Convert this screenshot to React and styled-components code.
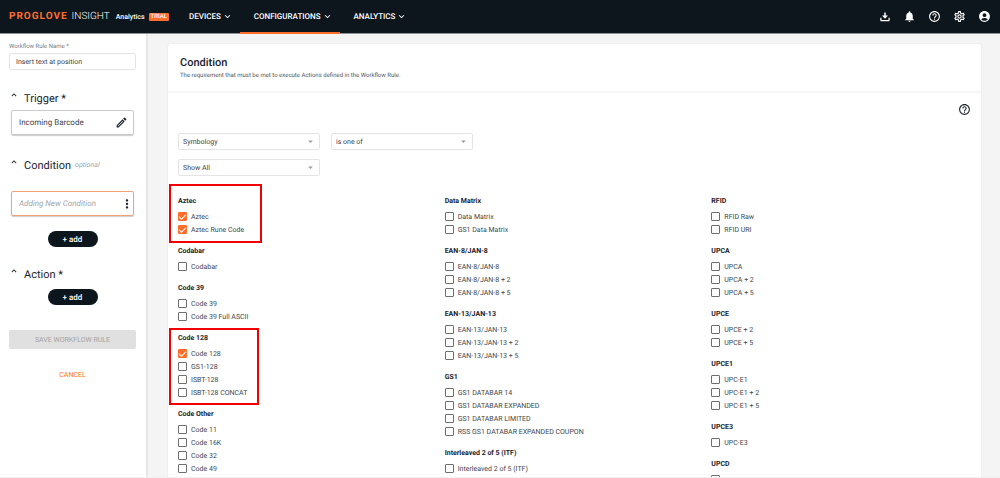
import React, { useState } from "react";
import styled, { createGlobalStyle } from "styled-components";
import {
  MdAccountCircle,
  MdArrowDropDown,
  MdHelpOutline,
  MdKeyboardArrowDown,
  MdKeyboardArrowUp,
  MdMoreVert,
  MdNotifications,
  MdOutlineModeEdit,
  MdOutlineSettings,
} from "react-icons/md";

const navItems = [
  { name: "DEVICES" },
  { name: "CONFIGURATIONS", active: true },
  { name: "ANALYTICS" },
];

const columns = [
  [
    {
      title: "Aztec",
      items: ["Aztec", "Aztec Rune Code"],
      mark: { top: 11, bottom: 7, width: 93 },
    },
    { title: "Codabar", items: ["Codabar"] },
    { title: "Code 39", items: ["Code 39", "Code 39 Full ASCII"] },
    {
      title: "Code 128",
      items: ["Code 128", "GS1-128", "ISBT-128", "ISBT-128 CONCAT"],
      mark: { top: 4, bottom: 6, width: 90 },
    },
    {
      title: "Code Other",
      items: ["Code 11", "Code 16K", "Code 32", "Code 49", "Code 93"],
    },
  ],
  [
    { title: "Data Matrix", items: ["Data Matrix", "GS1 Data Matrix"] },
    {
      title: "EAN-8/JAN-8",
      items: ["EAN-8/JAN-8", "EAN-8/JAN-8 + 2", "EAN-8/JAN-8 + 5"],
    },
    {
      title: "EAN-13/JAN-13",
      items: ["EAN-13/JAN-13", "EAN-13/JAN-13 + 2", "EAN-13/JAN-13 + 5"],
    },
    {
      title: "GS1",
      items: [
        "GS1 DATABAR 14",
        "GS1 DATABAR EXPANDED",
        "GS1 DATABAR LIMITED",
        "RSS GS1 DATABAR EXPANDED COUPON",
      ],
    },
    { title: "Interleaved 2 of 5 (ITF)", items: ["Interleaved 2 of 5 (ITF)"] },
  ],
  [
    { title: "RFID", items: ["RFID Raw", "RFID URI"] },
    { title: "UPCA", items: ["UPCA", "UPCA + 2", "UPCA + 5"] },
    { title: "UPCE", items: ["UPCE + 2", "UPCE + 5"] },
    { title: "UPCE1", items: ["UPC-E1", "UPC-E1 + 2", "UPC-E1 + 5"] },
    { title: "UPCE3", items: ["UPC-E3"] },
    { title: "UPCD", items: ["UPC-D"] },
  ],
];

const DownloadIcon = () => (
  <svg width="12" height="12" viewBox="0 0 24 24" fill="currentColor">
    <path d="M2.500 13.500h2.500v4.500h14v-4.500h2.500V18c0 1.400-1.100 2.500-2.500 2.500H5c-1.400 0-2.500-1.100-2.500-2.500z" />
    <path d="M10.500 3h3v6h4.500l-6 6.500-6-6.500h4.500z" />
  </svg>
);

const Dropdown = ({ label, value }) => (
  <SelectBox>
    <StSelect aria-label={label} defaultValue={value}>
      <option>{value}</option>
    </StSelect>
    <MdArrowDropDown size={11} />
  </SelectBox>
);

const Section = ({ title, hint, gap }) => (
  <SectionHead $gap={gap}>
    <ToggleBtn aria-label={`Collapse ${title}`}>
      <MdKeyboardArrowUp size={10} />
    </ToggleBtn>
    <SectionTitle>{title}</SectionTitle>
    {hint && <Hint>{hint}</Hint>}
  </SectionHead>
);

const App = () => {
  const [ruleName, setRuleName] = useState("Insert text at position");
  const [checked, setChecked] = useState(["Aztec", "Aztec Rune Code", "Code 128"]);

  const toggleHandler = (item) => {
    setChecked(
      checked.includes(item)
        ? checked.filter((name) => name !== item)
        : [...checked, item]
    );
  };

  return (
    <Page>
      <GlobalStyle />
      <Header>
        <Logo href="#">
          <Brand>PROGLOVE</Brand>
          <Product>INSIGHT</Product>
          <Plan>Analytics</Plan>
          <Badge>TRIAL</Badge>
        </Logo>
        <Nav>
          {navItems.map((item) => (
            <NavBtn key={item.name} $active={item.active}>
              {item.name}
              <MdKeyboardArrowDown size={11} />
            </NavBtn>
          ))}
        </Nav>
        <IconSet>
          <IconBtn aria-label="Downloads"><DownloadIcon /></IconBtn>
          <IconBtn aria-label="Notifications"><MdNotifications size={13} /></IconBtn>
          <IconBtn aria-label="Help"><MdHelpOutline size={13} /></IconBtn>
          <IconBtn aria-label="Settings"><MdOutlineSettings size={13} /></IconBtn>
          <IconBtn aria-label="Account"><MdAccountCircle size={13} /></IconBtn>
        </IconSet>
      </Header>

      <Body>
        <Sidebar>
          <FieldLabel htmlFor="rule-name">Workflow Rule Name *</FieldLabel>
          <NameInput
            id="rule-name"
            value={ruleName}
            onChange={(e) => setRuleName(e.target.value)}
          />

          <Section title="Trigger *" gap={20} />
          <StepCard $gap={4}>
            <span>Incoming Barcode</span>
            <IconBtn aria-label="Edit trigger"><MdOutlineModeEdit size={13} /></IconBtn>
          </StepCard>

          <Section title="Condition" hint="optional" gap={22} />
          <StepCard $gap={18} $pending>
            <span>Adding New Condition</span>
            <MenuBtn aria-label="Condition menu"><MdMoreVert size={14} /></MenuBtn>
          </StepCard>
          <AddBtn $gap={15}>+ add</AddBtn>

          <Section title="Action *" gap={19} />
          <AddBtn $gap={7}>+ add</AddBtn>

          <SaveBtn disabled>SAVE WORKFLOW RULE</SaveBtn>
          <CancelBtn>CANCEL</CancelBtn>
        </Sidebar>

        <Main>
          <Panel>
            <PanelHead>
              <PanelTitle>Condition</PanelTitle>
              <PanelText>
                The requirement that must be met to execute Actions defined in the Workflow Rule.
              </PanelText>
            </PanelHead>
            <HelpRow>
              <IconBtn aria-label="Condition help"><MdHelpOutline size={13} /></IconBtn>
            </HelpRow>
            <Filters>
              <FilterRow>
                <Dropdown label="Field" value="Symbology" />
                <Dropdown label="Operator" value="is one of" />
              </FilterRow>
              <FilterRow>
                <Dropdown label="Filter" value="Show All" />
              </FilterRow>
            </Filters>
            <Columns>
              {columns.map((groups, i) => (
                <div key={i}>
                  {groups.map((group) => (
                    <Group key={group.title}>
                      <GroupTitle>{group.title}</GroupTitle>
                      {group.items.map((item) => (
                        <Option key={item}>
                          <CheckBox
                            type="checkbox"
                            checked={checked.includes(item)}
                            onChange={() => toggleHandler(item)}
                          />
                          {item}
                        </Option>
                      ))}
                      {group.mark && (
                        <Mark
                          $top={group.mark.top}
                          $bottom={group.mark.bottom}
                          $width={group.mark.width}
                        />
                      )}
                    </Group>
                  ))}
                </div>
              ))}
            </Columns>
          </Panel>
        </Main>
      </Body>
    </Page>
  );
};

export default App;

const dark = "#0e161d";
const orange = "#ff6d2a";

const GlobalStyle = createGlobalStyle`
  * {
    box-sizing: border-box;
  }
  body {
    margin: 0;
    font-family: Roboto, "Liberation Sans", sans-serif;
    font-size: 7px;
    color: #1b232b;
    text-rendering: geometricPrecision;
  }
  button, input, select {
    font-family: inherit;
    font-size: inherit;
    color: inherit;
    text-rendering: inherit;
  }
  button {
    padding: 0;
    border: none;
    background: none;
    cursor: pointer;
  }
  svg {
    display: block;
    flex-shrink: 0;
  }
`;

const Page = styled.div`
  height: 100vh;
  display: flex;
  flex-direction: column;
  background: #fff;
  border-bottom: 1px solid #f0f0f0;
  overflow: hidden;
`;

const Header = styled.header`
  height: 34px;
  flex-shrink: 0;
  display: flex;
  align-items: center;
  padding: 0 9px;
  background: ${dark};
  color: #fff;
  border-bottom: 1px solid #8e9296;
`;

const Logo = styled.a`
  width: 166px;
  display: flex;
  align-items: center;
  color: #fff;
  text-decoration: none;
`;

const Brand = styled.span`
  font-size: 10px;
  font-weight: bold;
  letter-spacing: 1px;
  color: ${orange};
`;

const Product = styled.span`
  margin-left: 4px;
  font-size: 10px;
  font-weight: 300;
`;

const Plan = styled.span`
  margin-left: 6px;
  font-weight: 500;
`;

const Badge = styled.span`
  margin-left: 4px;
  padding: 0 2px;
  border-radius: 1px;
  background: ${orange};
  font-size: 6px;
  line-height: 8px;
  font-weight: 500;
`;

const Nav = styled.nav`
  align-self: stretch;
  display: flex;
  margin-bottom: -1px;
`;

const NavBtn = styled.button`
  display: flex;
  align-items: center;
  gap: 1px;
  padding: 0 7px 0 14px;
  font-size: 8px;
  font-weight: 500;
  border-bottom: 2px solid ${(props) => (props.$active ? orange : "transparent")};
`;

const IconSet = styled.div`
  display: flex;
  align-items: center;
  gap: 12px;
  margin-left: auto;
`;

const IconBtn = styled.button`
  display: flex;
`;

const Body = styled.div`
  flex: 1;
  min-height: 0;
  display: flex;
`;

const Sidebar = styled.aside`
  width: 148px;
  flex-shrink: 0;
  display: flex;
  flex-direction: column;
  padding: 8px 10px 0 9px;
  border-right: 2px solid #e6e6e6;
`;

const FieldLabel = styled.label`
  font-size: 6px;
  line-height: 10px;
  color: #757a80;
`;

const NameInput = styled.input`
  height: 17px;
  margin-top: 1px;
  padding: 0 6px;
  border: 1px solid #e4e4e4;
  border-radius: 2px;
  outline: none;
  color: #40464d;
`;

const SectionHead = styled.div`
  height: 16px;
  margin-top: ${(props) => props.$gap}px;
  display: flex;
  align-items: center;
`;

const ToggleBtn = styled.button`
  width: 15px;
  display: flex;
  align-self: flex-start;
`;

const SectionTitle = styled.h2`
  margin: 0;
  font-size: 11px;
  font-weight: 400;
`;

const Hint = styled.span`
  margin-left: 4px;
  font-size: 7px;
  font-style: italic;
  color: #a2a6aa;
`;

const StepCard = styled.div`
  height: 25px;
  margin: ${(props) => props.$gap}px 2px 0;
  padding: 0 5px 0 7px;
  display: flex;
  align-items: center;
  justify-content: space-between;
  border: 1px solid ${(props) => (props.$pending ? "#f3a27c" : "#c9c9c9")};
  border-radius: 2px;
  box-shadow: 0 1px 1px rgba(0, 0, 0, 0.2);
  font-size: 8px;

  span {
    color: ${(props) => (props.$pending ? "#a2a6aa" : "#40464d")};
    font-style: ${(props) => (props.$pending ? "italic" : "normal")};
  }
`;

const MenuBtn = styled(IconBtn)`
  margin-right: -6px;
`;

const AddBtn = styled.button`
  width: 50px;
  height: 16px;
  margin: ${(props) => props.$gap}px auto 0;
  flex-shrink: 0;
  border-radius: 8px;
  background: ${dark};
  color: #fff;
  font-size: 8px;
  font-weight: 500;
`;

const SaveBtn = styled.button`
  height: 19px;
  margin-top: 25px;
  flex-shrink: 0;
  border-radius: 2px;
  background: #e0e0e0;
  color: #a4a4a4;
`;

const CancelBtn = styled.button`
  margin: 21px auto 0;
  line-height: 10px;
  color: ${orange};
`;

const Main = styled.main`
  flex: 1;
  min-width: 0;
  padding: 10px 19px 0 20px;
  background: #f4f4f4;
  overflow: hidden;
`;

const Panel = styled.section`
  background: #fff;
  border-radius: 2px;
  box-shadow: 0 0 1px rgba(0, 0, 0, 0.2);
`;

const PanelHead = styled.div`
  height: 49px;
  padding: 12px 12px 0;
  border-bottom: 2px solid #f6f6f6;
`;

const PanelTitle = styled.h1`
  margin: 0;
  font-size: 11px;
  line-height: 14px;
  font-weight: 500;
`;

const PanelText = styled.p`
  margin: 0;
  font-size: 6px;
  line-height: 12px;
  color: #50565c;
`;

const HelpRow = styled.div`
  display: flex;
  justify-content: flex-end;
  padding: 10px 10px 0;
`;

const Filters = styled.div`
  display: grid;
  gap: 9px;
  padding: 17px 10px 0;
`;

const FilterRow = styled.div`
  display: flex;
  gap: 11px;
`;

const SelectBox = styled.div`
  position: relative;
  width: 142px;

  svg {
    position: absolute;
    top: 3px;
    right: 4px;
    color: #9a9a9a;
    pointer-events: none;
  }
`;

const StSelect = styled.select`
  width: 100%;
  height: 17px;
  padding: 0 4px;
  appearance: none;
  border: 1px solid #e4e4e4;
  border-radius: 2px;
  background: #fff;
  color: #40464d;
`;

const Columns = styled.div`
  display: grid;
  grid-template-columns: repeat(3, 1fr);
  padding: 19px 3px 0 10px;
`;

const Group = styled.div`
  position: relative;
  margin-bottom: 9px;
`;

const GroupTitle = styled.h3`
  margin: 0 0 3px;
  font-size: 7px;
  line-height: 12px;
  font-weight: bold;
`;

const Option = styled.label`
  height: 13px;
  display: flex;
  align-items: center;
  gap: 4px;
  color: #40464d;
`;

const CheckBox = styled.input`
  appearance: none;
  width: 9px;
  height: 9px;
  margin: 0;
  display: grid;
  place-items: center;
  border: 1px solid #6f6f6f;
  border-radius: 1px;

  &:checked {
    border-color: ${orange};
    background: ${orange};
  }
  &:checked::after {
    content: "";
    width: 6px;
    height: 3px;
    margin-bottom: 2px;
    border-left: 1px solid #fff;
    border-bottom: 1px solid #fff;
    transform: rotate(-45deg);
  }
`;

const Mark = styled.div`
  position: absolute;
  top: -${(props) => props.$top}px;
  bottom: -${(props) => props.$bottom}px;
  left: -9px;
  width: ${(props) => props.$width}px;
  border: 2px solid #f00000;
  pointer-events: none;
`;
